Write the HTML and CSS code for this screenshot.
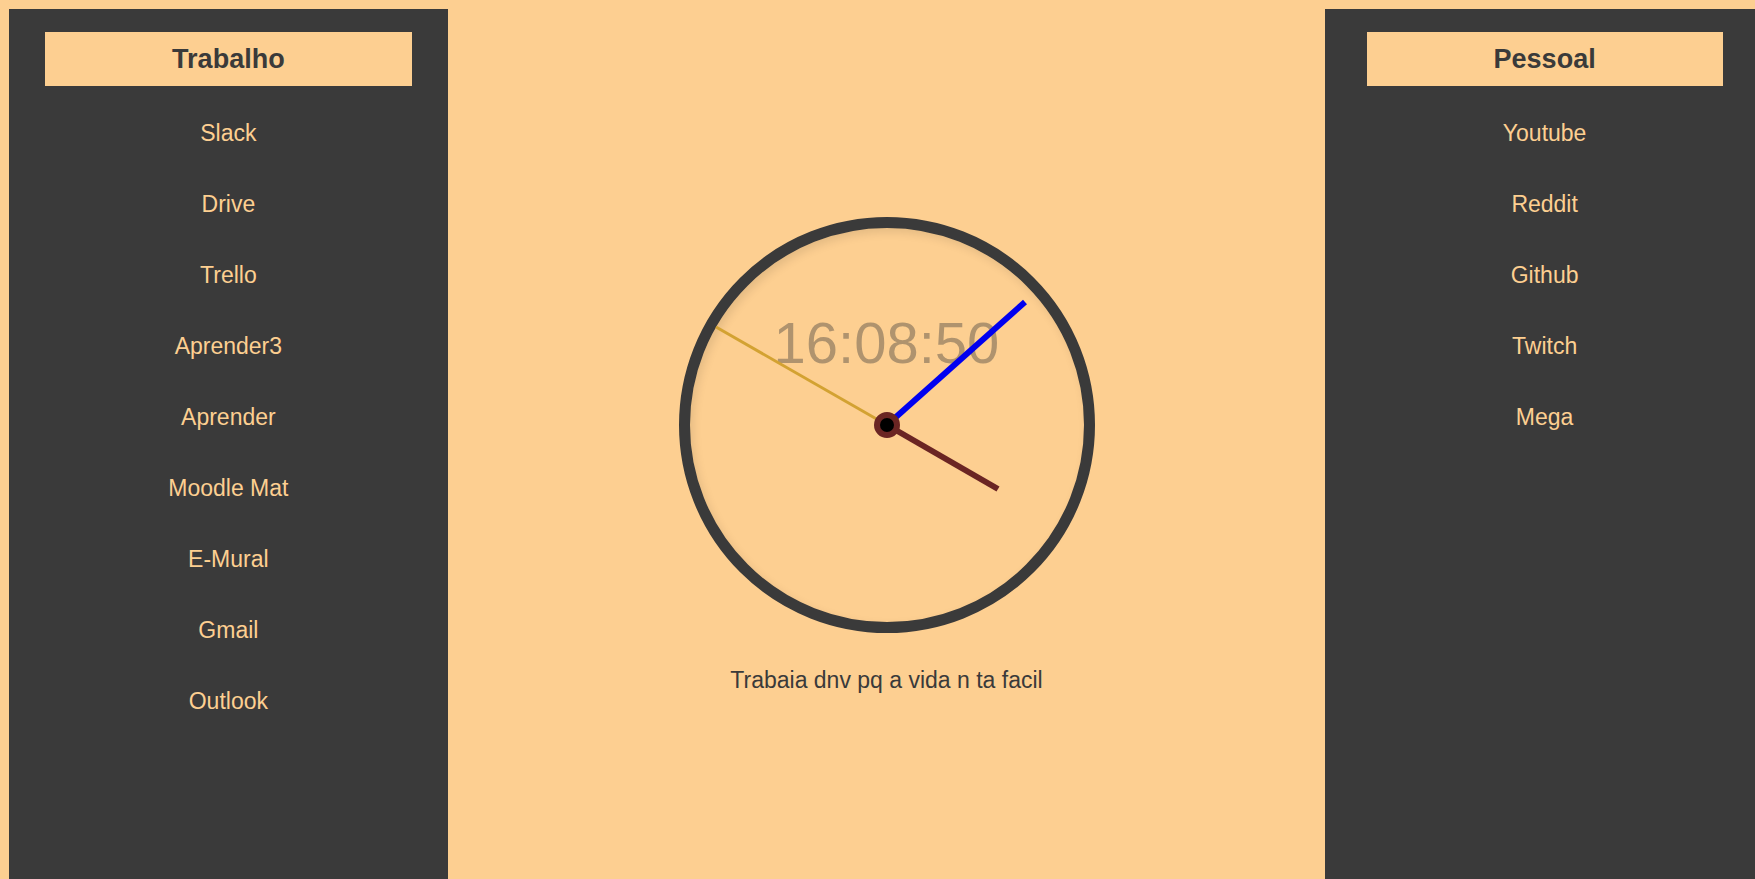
FILE: index.html
```html
<!DOCTYPE html>
<html lang="pt-BR">
<head>
<meta charset="utf-8">
<title>Trabalho e Pessoal</title>
<link rel="stylesheet" href="styles.css">
</head>
<body>
<div class="page">
  <nav class="panel" aria-labelledby="work">
    <h2 class="panel-title" id="work">Trabalho</h2>
    <ul class="links">
      <li><a href="#slack">Slack</a></li>
      <li><a href="#drive">Drive</a></li>
      <li><a href="#trello">Trello</a></li>
      <li><a href="#aprender3">Aprender3</a></li>
      <li><a href="#aprender">Aprender</a></li>
      <li><a href="#moodle">Moodle Mat</a></li>
      <li><a href="#mural">E-Mural</a></li>
      <li><a href="#gmail">Gmail</a></li>
      <li><a href="#outlook">Outlook</a></li>
    </ul>
  </nav>
  <main class="center">
    <div class="clock">
      <time class="digital">16:08:50</time>
      <svg class="hands" viewBox="-197 -197 394 394" aria-hidden="true">
        <line class="second" x2="-171" y2="-98"/>
        <line class="minute" x2="138" y2="-123"/>
        <line class="hour" x2="111" y2="64"/>
        <circle class="hub" r="10"/>
      </svg>
    </div>
    <p class="message">Trabaia dnv pq a vida n ta facil</p>
  </main>
  <nav class="panel" aria-labelledby="personal">
    <h2 class="panel-title" id="personal">Pessoal</h2>
    <ul class="links">
      <li><a href="#youtube">Youtube</a></li>
      <li><a href="#reddit">Reddit</a></li>
      <li><a href="#github">Github</a></li>
      <li><a href="#twitch">Twitch</a></li>
      <li><a href="#mega">Mega</a></li>
    </ul>
  </nav>
</div>
</body>
</html>
```
FILE: styles.css
```css
* {
  box-sizing: border-box;
}

body {
  margin: 9px 0 0 9px;
  overflow: hidden;
  background: #fdcf91;
  color: #3a3a3a;
  font-family: "Liberation Sans", Arial, sans-serif;
  font-size: 23px;
}

.page {
  display: grid;
  grid-template-columns: 1fr 2fr 1fr;
  width: 100vw;
  min-height: 100vh;
}

.panel {
  display: flex;
  flex-direction: column;
  align-items: center;
  gap: 12px;
  padding-top: 23px;
  background: #3a3a3a;
}

.panel-title {
  margin: 0;
  padding: 0 127px;
  background: #fdcf91;
  font-size: 27px;
  line-height: 54px;
}

.links {
  margin: 0;
  padding: 0;
  list-style: none;
  text-align: center;
  line-height: 71px;
}

.links a {
  color: #fdcf91;
  text-decoration: none;
}

.center {
  display: flex;
  flex-direction: column;
  align-items: center;
  gap: 33px;
  padding-top: 208px;
}

.clock {
  position: relative;
  display: flex;
  justify-content: center;
  width: 416px;
  aspect-ratio: 1;
  padding-top: 82px;
  border: 11px solid #3a3a3a;
  border-radius: 50%;
  box-shadow: inset 3px 4px 10px rgba(0, 0, 0, 0.1);
}

.digital {
  color: rgba(58, 58, 58, 0.4);
  font-size: 58px;
  line-height: 66px;
}

.hands {
  position: absolute;
  inset: 0;
}

.second {
  stroke: #d3a232;
  stroke-width: 3;
}

.minute {
  stroke: #0000f0;
  stroke-width: 6;
}

.hour {
  stroke: #6b2523;
  stroke-width: 6;
}

.hub {
  fill: #000;
  stroke: #6b2523;
  stroke-width: 6;
}

.message {
  margin: 0;
  line-height: 28px;
}
```
